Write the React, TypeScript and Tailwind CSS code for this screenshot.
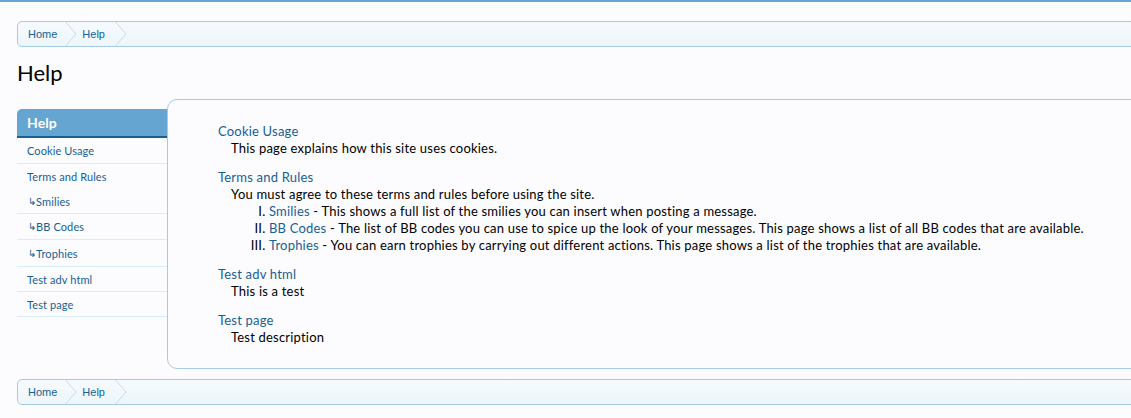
import React from "react";

type Crumb = { label: string };

const crumbs: Crumb[] = [{ label: "Home" }, { label: "Help" }];

// row heights measured off the original, borders included
const sideItems = [
  { label: "Cookie Usage", child: false, border: true, h: "h-[26px]" },
  { label: "Terms and Rules", child: false, border: false, h: "h-[25px]" },
  { label: "Smilies", child: true, border: true, h: "h-[25px]" },
  { label: "BB Codes", child: true, border: true, h: "h-[26px]" },
  { label: "Trophies", child: true, border: true, h: "h-[27px]" },
  { label: "Test adv html", child: false, border: true, h: "h-[25px]" },
  { label: "Test page", child: false, border: true, h: "h-[25px]" },
];

const Breadcrumb = () => {
  return (
    <nav className="flex h-[26px] w-[1200px] items-stretch rounded-[5px] border border-[#a5cae4] bg-gradient-to-b from-[#f5fafd] to-[#eef6fb] font-['Liberation_Sans',sans-serif] text-[11px] tracking-normal text-[#176093]">
      {crumbs.map((crumb, i) => (
        <div key={crumb.label} className="flex items-center">
          <span className={i === 0 ? "pl-[10px] pr-[8px]" : "pl-[5px] pr-[10px]"}>
            {crumb.label}
          </span>
          {/* chevron separator */}
          <svg width="12" height="24" viewBox="0 0 12 24" className="block">
            <polyline
              points="0.5,0 11,12 0.5,24"
              fill="none"
              stroke="#c3dcee"
              strokeWidth="1"
            />
          </svg>
        </div>
      ))}
    </nav>
  );
};

const Sidebar = () => {
  return (
    <aside className="mt-[10px] w-[150px] shrink-0 tracking-[0.1px]">
      <h3 className="rounded-tl-[5px] border-b-2 border-[#176093] bg-[#65a5d1] px-[10px] pt-[4px] pb-[3px] text-[14px] font-bold leading-[20px] text-white">
        Help
      </h3>
      <ul className="text-[11px] text-[#176093]">
        {sideItems.map((item) => (
          <li
            key={item.label}
            className={`flex ${item.h} items-center ${item.border ? "border-b border-[#d7edfc]" : ""} ${item.child ? "pl-[11px]" : "pl-[10px]"}`}
          >
            {item.child && <span className="text-[10px] text-[#176093]">↳</span>}
            {item.label}
          </li>
        ))}
      </ul>
    </aside>
  );
};

const HelpEntry = ({
  title,
  description,
  children,
}: {
  title: string;
  description: string;
  children?: React.ReactNode;
}) => {
  return (
    <div className="mb-[12px] last:mb-0">
      <div className="text-[#176093]">{title}</div>
      <div className="pl-[13px] text-black">{description}</div>
      {children}
    </div>
  );
};

export default function App() {
  return (
    <div className="h-[418px] overflow-hidden bg-[#fcfcff] font-['Lato','Liberation_Sans',sans-serif] text-[13px] leading-[17px] tracking-[0.2px]">
      <div className="h-[2px] bg-[#65a5d1]" />
      <div className="w-[1200px] pl-[17px] pt-[19px]">
        <Breadcrumb />
        <h1 className="mt-[13px] mb-[13px] text-[22px] leading-[26px] tracking-normal text-black">Help</h1>
        <div className="flex">
          <Sidebar />
          <main className="h-[270px] flex-1 rounded-l-[10px] border border-[#a5cae4] pl-[50px] pt-[23px]">
            <HelpEntry title="Cookie Usage" description="This page explains how this site uses cookies." />
            <HelpEntry
              title="Terms and Rules"
              description="You must agree to these terms and rules before using the site."
            >
              <ol className="list-[upper-roman] pl-[51px] text-black">
                <li>
                  <span className="text-[#176093]">Smilies</span> - This shows a full list of the smilies you can insert when posting a message.
                </li>
                <li>
                  <span className="text-[#176093]">BB Codes</span> - The list of BB codes you can use to spice up the look of your messages. This page shows a list of all BB codes that are available.
                </li>
                <li>
                  <span className="text-[#176093]">Trophies</span> - You can earn trophies by carrying out different actions. This page shows a list of the trophies that are available.
                </li>
              </ol>
            </HelpEntry>
            <HelpEntry title="Test adv html" description="This is a test" />
            <HelpEntry title="Test page" description="Test description" />
          </main>
        </div>
        <div className="mt-[10px]">
          <Breadcrumb />
        </div>
      </div>
    </div>
  );
}
